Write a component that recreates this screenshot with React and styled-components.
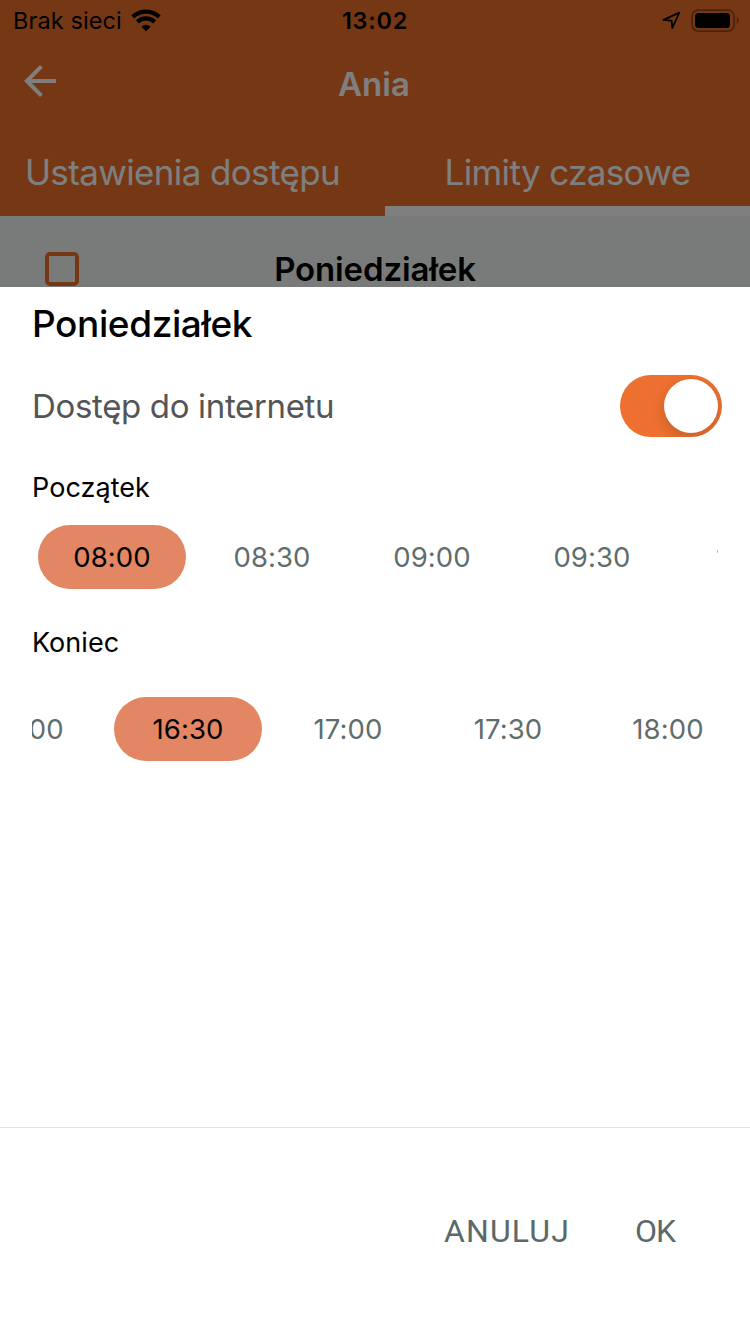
import { useState } from 'react';
import styled, { createGlobalStyle } from 'styled-components';

const START_TIMES = ['08:00', '08:30', '09:00', '09:30', '10:00'];
const END_TIMES = ['16:00', '16:30', '17:00', '17:30', '18:00'];

function WifiIcon() {
  return (
    <svg width="30" height="23" viewBox="0 0 30 23" fill="none" stroke="#000" strokeWidth="4.3">
      <path d="M1.8 7.9A19.3 19.3 0 0 1 28.2 7.9" />
      <path d="M6.4 12.9A12.3 12.3 0 0 1 23.6 12.9" />
      <path
        d="M10.9 17.7A6.2 6.2 0 0 1 19.1 17.7L15 21.9Z"
        fill="#000"
        strokeWidth="0.8"
        strokeLinejoin="round"
      />
    </svg>
  );
}

function LocationIcon() {
  return (
    <svg width="19" height="19" viewBox="0 0 19 19" fill="none">
      <path
        d="M17.3 1.6L10.3 17L9.6 9.6L1.5 8.9Z"
        stroke="#000"
        strokeWidth="1.8"
        strokeLinejoin="round"
      />
    </svg>
  );
}

function BatteryIcon() {
  return (
    <svg width="48" height="24" viewBox="0 0 48 24">
      <rect x="1.1" y="1.1" width="42" height="21" rx="6" fill="none" stroke="#000" strokeOpacity="0.36" strokeWidth="1.8" />
      <rect x="4" y="4" width="35" height="15" rx="3.5" fill="#000" />
      <path d="M45.8 8Q47.8 9 47.8 11.5T45.8 15Z" fill="#000" fillOpacity="0.4" />
    </svg>
  );
}

function BackIcon() {
  return (
    <svg width="48" height="48" viewBox="0 0 24 24" fill="#fff">
      <path d="M20 11H7.83l5.59-5.59L12 4l-8 8 8 8 1.41-1.41L7.83 13H20v-2z" />
    </svg>
  );
}

function TimePicker({ times, value, onChange, shift }) {
  return (
    <TimeViewport>
      <TimeTrack $shift={shift}>
        {times.map((t) => (
          <TimeSlot key={t}>
            <TimePill $selected={t === value} onClick={() => onChange(t)}>
              {t}
            </TimePill>
          </TimeSlot>
        ))}
      </TimeTrack>
    </TimeViewport>
  );
}

function App() {
  const [access, setAccess] = useState(true);
  const [start, setStart] = useState('08:00');
  const [end, setEnd] = useState('16:30');

  return (
    <Screen>
      <GlobalStyle />

      <Header>
        <StatusBar>
          <Carrier>
            Brak sieci
            <WifiIcon />
          </Carrier>
          <Clock>13:02</Clock>
          <StatusIcons>
            <LocationIcon />
            <BatteryIcon />
          </StatusIcons>
        </StatusBar>

        <NavBar>
          <BackButton>
            <BackIcon />
          </BackButton>
          <NavTitle>Ania</NavTitle>
        </NavBar>

        <Tabs>
          <Tab $width={385}>Ustawienia dostępu</Tab>
          <Tab $width={365} $active>
            Limity czasowe
          </Tab>
        </Tabs>
      </Header>

      <DayRow>
        <Checkbox />
        <DayName>Poniedziałek</DayName>
      </DayRow>

      <Backdrop>
        <Sheet>
          <SheetTitle>Poniedziałek</SheetTitle>

          <AccessRow>
            <AccessLabel>Dostęp do internetu</AccessLabel>
            <Toggle $on={access} onClick={() => setAccess(!access)}>
              <Knob />
            </Toggle>
          </AccessRow>

          <FieldLabel $height={74}>Początek</FieldLabel>
          <TimePicker times={START_TIMES} value={start} onChange={setStart} shift={0} />

          <FieldLabel $height={108}>Koniec</FieldLabel>
          <TimePicker times={END_TIMES} value={end} onChange={setEnd} shift={84} />

          <Actions>
            <ActionButton $spacing={1.1}>ANULUJ</ActionButton>
            <ActionButton $spacing={-1}>OK</ActionButton>
          </Actions>
        </Sheet>
      </Backdrop>
    </Screen>
  );
}

export default App;

const GlobalStyle = createGlobalStyle`
  * {
    box-sizing: border-box;
  }

  body {
    margin: 0;
    font-family: Inter, 'Liberation Sans', sans-serif;
  }

  button {
    padding: 0;
    border: none;
    background: none;
    font: inherit;
    cursor: pointer;
  }

  svg {
    display: block;
    flex-shrink: 0;
  }
`;

const Screen = styled.div`
  position: relative;
  width: 750px;
  height: 1334px;
  overflow: hidden;
  background: #f2f6f4;
`;

const Header = styled.header`
  background: #ed7028;
`;

const StatusBar = styled.div`
  display: grid;
  grid-template-columns: 1fr auto 1fr;
  align-items: center;
  height: 40px;
  padding-top: 1px;
  font-size: 23.5px;
  color: #000;
`;

const Carrier = styled.div`
  display: flex;
  align-items: center;
  gap: 9px;
  padding-left: 13px;
  letter-spacing: 0.1px;
`;

const Clock = styled.span`
  font-weight: 600;
  letter-spacing: 0.7px;
`;

const StatusIcons = styled.div`
  display: flex;
  align-items: center;
  justify-content: flex-end;
  gap: 10px;
  padding-right: 11px;
`;

const NavBar = styled.div`
  display: grid;
  grid-template-columns: 1fr auto 1fr;
  align-items: center;
  height: 88px;
`;

const BackButton = styled.button`
  justify-self: start;
  margin-left: 16px;
  padding-bottom: 6px;
`;

const NavTitle = styled.h1`
  margin: 0;
  padding-right: 2px;
  font-size: 33px;
  font-weight: 600;
  letter-spacing: 0.1px;
  color: #fff;
`;

const Tabs = styled.nav`
  display: flex;
  height: 88px;
`;

const Tab = styled.button`
  width: ${({ $width }) => $width}px;
  padding-top: ${({ $active }) => ($active ? 10 : 0)}px;
  padding-right: ${({ $active }) => ($active ? 0 : 20)}px;
  border-bottom: ${({ $active }) => ($active ? '10px solid #fff' : 'none')};
  font-size: 35px;
  letter-spacing: -0.63px;
  color: #fff;
`;

const DayRow = styled.div`
  display: grid;
  grid-template-columns: 1fr auto 1fr;
  align-items: center;
  height: 106px;
`;

const Checkbox = styled.div`
  width: 34px;
  height: 34px;
  margin-left: 45px;
  border: 4px solid #ed7028;
  border-radius: 5px;
`;

const DayName = styled.span`
  font-size: 33px;
  font-weight: 600;
  letter-spacing: -0.13px;
  color: #000;
`;

const Backdrop = styled.div`
  position: absolute;
  inset: 0;
  display: flex;
  flex-direction: column;
  justify-content: flex-end;
  background: rgba(0, 0, 0, 0.5);
`;

const Sheet = styled.section`
  display: flex;
  flex-direction: column;
  height: 1047px;
  background: #fff;
`;

const SheetTitle = styled.h2`
  margin: 0;
  padding-left: 32px;
  font-size: 37px;
  font-weight: 500;
  line-height: 74px;
  letter-spacing: -0.4px;
  color: #000;
`;

const AccessRow = styled.div`
  display: flex;
  align-items: center;
  justify-content: space-between;
  height: 90px;
  padding: 0 28px 0 32px;
`;

const AccessLabel = styled.span`
  font-size: 33px;
  letter-spacing: -0.34px;
  color: #555;
`;

const Toggle = styled.button`
  display: flex;
  justify-content: ${({ $on }) => ($on ? 'flex-end' : 'flex-start')};
  width: 102px;
  height: 62px;
  padding: 4px;
  border-radius: 31px;
  overflow: hidden;
  background: ${({ $on }) => ($on ? '#ed7030' : '#e9e9ea')};
`;

const Knob = styled.span`
  width: 54px;
  height: 54px;
  border-radius: 50%;
  background: #fff;
  box-shadow: 0 5px 14px rgba(0, 0, 0, 0.16);
`;

const FieldLabel = styled.div`
  height: ${({ $height }) => $height}px;
  padding-left: 32px;
  font-size: 27px;
  line-height: ${({ $height }) => $height}px;
  letter-spacing: 0.05px;
  color: #000;
`;

const TimeViewport = styled.div`
  margin: 0 32px;
  overflow: hidden;
`;

const TimeTrack = styled.div`
  display: flex;
  margin-left: ${({ $shift }) => -$shift}px;
`;

const TimeSlot = styled.div`
  display: flex;
  flex-shrink: 0;
  justify-content: center;
  width: 160px;
`;

const TimePill = styled.button`
  width: 148px;
  height: 64px;
  border-radius: 32px;
  background: ${({ $selected }) => ($selected ? '#e28663' : 'transparent')};
  font-size: 27.5px;
  letter-spacing: 0.1px;
  color: ${({ $selected }) => ($selected ? '#000' : '#5f6d6d')};
`;

const Actions = styled.footer`
  display: flex;
  align-items: center;
  justify-content: flex-end;
  gap: 65px;
  height: 207px;
  margin-top: auto;
  padding-right: 75px;
  border-top: 1px solid #e4e4e4;
`;

const ActionButton = styled.button`
  font-family: Roboto, 'Liberation Sans', sans-serif;
  font-size: 32px;
  font-weight: 450;
  letter-spacing: ${({ $spacing }) => $spacing}px;
  color: #5a6969;
`;
